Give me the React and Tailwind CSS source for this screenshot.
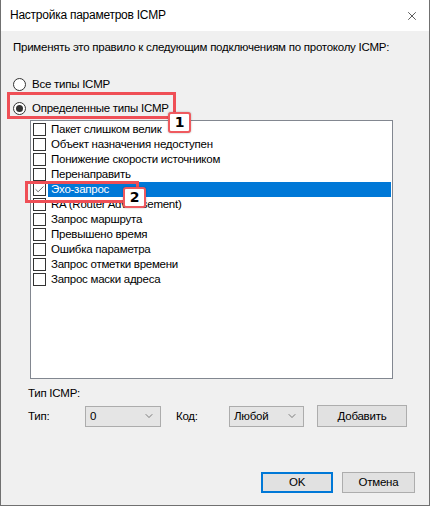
import { Check, ChevronDown, X } from 'lucide-react';

const items = [
  'Пакет слишком велик',
  'Объект назначения недоступен',
  'Понижение скорости источником',
  'Перенаправить',
  'Эхо-запрос',
  'RA (Router Advertisement)',
  'Запрос маршрута',
  'Превышено время',
  'Ошибка параметра',
  'Запрос отметки времени',
  'Запрос маски адреса',
];

function Radio({ checked, label }) {
  return (
    <div className="flex items-center h-[15px] pl-[12px]">
      <span className="w-[13px] h-[13px] rounded-full border border-[#333] bg-white flex items-center justify-center">
        {checked && <span className="w-[7px] h-[7px] rounded-full bg-[#333]" />}
      </span>
      <span className="ml-[6px]">{label}</span>
    </div>
  );
}

function Select({ value, width }) {
  return (
    <div className={`${width} h-[21px] bg-[#e5e5e5] border border-[#acacac] flex items-center justify-between pl-[4px] pr-[5px]`}>
      <span>{value}</span>
      <ChevronDown className="w-[12px] h-[12px] text-[#333]" strokeWidth={1.2} />
    </div>
  );
}

function Badge({ n, className }) {
  return (
    <div className={`absolute w-[23px] h-[21px] bg-white border-2 border-[#ef5a5f] rounded-[3px] shadow-[0_0_2px_rgba(0,0,0,0.3)] flex items-center justify-center font-bold text-[14px] tracking-normal text-black ${className}`} style={{ fontFamily: '"DejaVu Sans", sans-serif' }}>
      {n}
    </div>
  );
}

export default function App() {
  return (
    <div className="relative w-[430px] h-[506px] bg-[#f0f0f0] border-l border-r border-b border-[#707070] flex flex-col text-[11.5px] tracking-[-0.25px] leading-[15px] text-black" style={{ fontFamily: '"Liberation Sans", Arial, sans-serif' }}>
      {/* Title bar */}
      <div className="h-[31px] bg-white flex items-center justify-between pl-[9px] pr-[10px] text-[12px]">
        <span>Настройка параметров ICMP</span>
        <X className="w-[14px] h-[14px]" strokeWidth={1.1} />
      </div>

      <div className="pl-[12px] mt-[9px]">Применять это правило к следующим подключениям по протоколу ICMP:</div>

      <div className="mt-[22px]">
        <Radio label="Все типы ICMP" />
      </div>
      <div className="mt-[9px]">
        <Radio checked label="Определенные типы ICMP" />
      </div>

      {/* List */}
      <div className="ml-[29px] mt-[4px] w-[363px] h-[259px] bg-white border border-[#828790] pt-[1px]">
        {items.map((it, i) => {
          const sel = i === 4;
          return (
            <div key={it} className="flex items-center h-[15px] pl-[2px]">
              <span className="w-[13px] h-[13px] border border-[#333] bg-white flex items-center justify-center shrink-0">
                {sel && <Check className="w-[11px] h-[11px] text-[#333]" strokeWidth={1.6} />}
              </span>
              <span className={`ml-[2px] mr-[1px] flex-1 h-[15px] pl-[3px] whitespace-nowrap ${sel ? 'bg-[#0078d7] text-white' : ''}`}>{it}</span>
            </div>
          );
        })}
      </div>

      <div className="pl-[27px] mt-[7px]">Тип ICMP:</div>
      <div className="flex items-center mt-[4px] pl-[27px]">
        <span className="w-[57px]">Тип:</span>
        <Select value="0" width="w-[76px]" />
        <span className="ml-[15px] w-[53px]">Код:</span>
        <Select value="Любой" width="w-[75px]" />
        <button className="ml-[13px] w-[90px] h-[22px] bg-[#e1e1e1] border border-[#adadad]">Добавить</button>
      </div>

      <div className="flex-1" />
      <div className="flex justify-end gap-[9px] pr-[14px] pb-[12px]">
        <button className="w-[72px] h-[21px] bg-[#e1e1e1] border-2 border-[#0078d7]">OK</button>
        <button className="w-[73px] h-[21px] bg-[#e1e1e1] border border-[#adadad]">Отмена</button>
      </div>

      {/* Annotations */}
      <div className="absolute left-[6px] top-[92px] w-[169px] h-[27px] border-[3px] border-[#ef4f56]" />
      <Badge n="1" className="left-[167px] top-[112px]" />
      <div className="absolute left-[24px] top-[181px] w-[114px] h-[22px] border-[3px] border-[#ef4f56]" />
      <Badge n="2" className="left-[122px] top-[187px]" />
    </div>
  );
}
